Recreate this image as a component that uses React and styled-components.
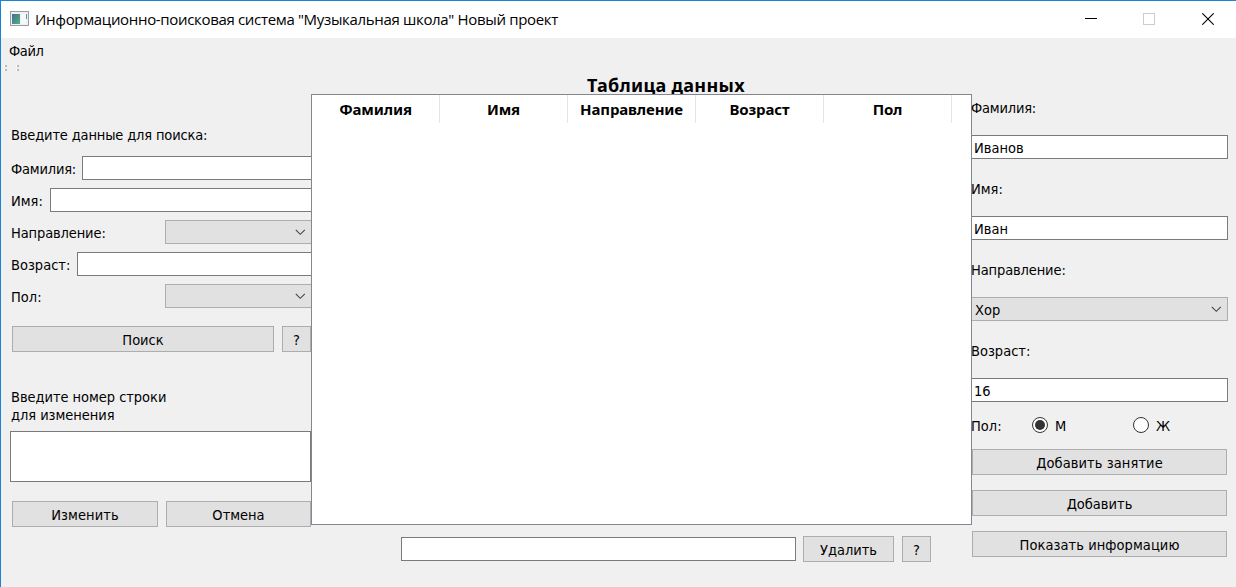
import React, { useState } from "react";
import styled, { createGlobalStyle } from "styled-components";

const GlobalStyle = createGlobalStyle`
  * { box-sizing: border-box; }
  body {
    margin: 0;
    overflow: hidden;
    background: #f0f0f0;
  }
  button, input, textarea { font: inherit; color: inherit; letter-spacing: inherit; }
`;

const Window = styled.div`
  display: flex;
  flex-direction: column;
  width: 1236px;
  height: 587px;
  overflow: hidden;
  border-top: 1px solid #1883d7;
  border-left: 1px solid #1883d7;
  background: #f0f0f0;
  color: #000;
  font: 14.5px/18px "DejaVu Sans Condensed", "DejaVu Sans", sans-serif;
  white-space: nowrap;
`;

const TitleBar = styled.header`
  display: flex;
  align-items: center;
  flex: none;
  height: 37px;
  padding: 0 0 1px 9px;
  background: #fff;
`;

const Title = styled.h1`
  flex: 1;
  margin: 0 0 0 5px;
  font: 400 15px/20px "Open Sans", "Noto Sans", sans-serif;
  letter-spacing: -0.33px;
`;

const WindowControl = styled.button`
  display: grid;
  place-items: center;
  width: 56px;
  height: 36px;
  margin-left: 2px;
  padding: 0;
  border: 0;
  background: none;
  &:last-child { margin-left: 3px; }
`;

const MenuBar = styled.nav`
  display: flex;
  align-items: center;
  flex: none;
  height: 24px;
  padding: 2px 0 0 8px;
`;

const MenuItem = styled.span`
  letter-spacing: -0.4px;
`;

const ToolBar = styled.div`
  display: flex;
  gap: 9px;
  flex: none;
  height: 13px;
  padding: 3px 0 0 3px;
`;

const Content = styled.main`
  display: grid;
  grid-template-columns: 310px 661px 256px;
  flex: 1;
`;

const SearchPanel = styled.section`
  display: flex;
  flex-direction: column;
  padding: 51px 0 0 10px;
`;

const Label = styled.label`
  letter-spacing: ${(p) => p.$tracking ?? 0}px;
`;

const SearchFields = styled.div`
  display: flex;
  flex-direction: column;
  gap: 8px;
  margin-top: 12px;
`;

const FieldRow = styled.div`
  display: grid;
  grid-template-columns: ${(p) => p.$labelWidth}px 1fr;
  align-items: center;
  height: 24px;
  label { padding-top: 2px; }
`;

const LineEdit = styled.input`
  width: 100%;
  min-width: 0;
  height: 24px;
  padding: 1px 2px 0;
  border: 1px solid #7a7a7a;
  border-left-width: ${(p) => (p.$joined === "left" ? 0 : 1)}px;
  border-right-width: ${(p) => (p.$joined === "right" ? 0 : 1)}px;
  border-radius: 0;
  background: #fff;
  outline: 0;
`;

const ComboBox = styled.div`
  display: flex;
  align-items: center;
  justify-content: space-between;
  width: 100%;
  height: 24px;
  padding: 1px 5px 0 3px;
  border: 1px solid #adadad;
  border-left-width: ${(p) => (p.$joined === "left" ? 0 : 1)}px;
  border-right-width: ${(p) => (p.$joined === "right" ? 0 : 1)}px;
  background: #e1e1e1;
`;

const ComboText = styled.span`
  min-height: 18px;
`;

const PushButton = styled.button`
  height: 26px;
  padding: 1px 0 0;
  border: 1px solid #adadad;
  border-radius: 0;
  background: #e1e1e1;
  text-align: center;
  letter-spacing: ${(p) => p.$tracking ?? 0}px;
`;

const ButtonRow = styled.div`
  display: grid;
  grid-template-columns: ${(p) => p.$columns};
  gap: 8px;
  margin: ${(p) => p.$top}px 0 0 1px;
`;

const RowPrompt = styled(Label)`
  margin-top: 36px;
  white-space: pre-line;
`;

const RowNumbers = styled.textarea`
  display: block;
  height: 51px;
  margin: 7px 0 0 -1px;
  padding: 3px;
  border: 1px solid #7a7a7a;
  border-radius: 0;
  background: #fff;
  resize: none;
  outline: 0;
`;

const TablePanel = styled.section`
  display: flex;
  flex-direction: column;
`;

const TableHeading = styled.h2`
  height: 19px;
  margin: 0 0 0 49px;
  font: 700 18px/20px "Noto Sans", "Open Sans", sans-serif;
  letter-spacing: 0.3px;
  text-align: center;
`;

const DataTable = styled.div`
  height: 431px;
  border: 1px solid #828790;
  background: #fff;
`;

const HeaderRow = styled.div`
  display: grid;
  grid-template-columns: repeat(5, 128px);
  height: 28px;
`;

const HeaderCell = styled.div`
  padding-top: 5px;
  border-right: 1px solid #e5e5e5;
  font: 700 15px/18px "Noto Sans", "Open Sans", sans-serif;
  letter-spacing: -0.15px;
  text-align: center;
`;

const DeleteRow = styled.div`
  display: flex;
  align-items: center;
  margin: 11px 0 0 90px;
`;

const DeleteEdit = styled(LineEdit)`
  width: 395px;
  margin-right: 7px;
`;

const DeleteButton = styled(PushButton)`
  width: 91px;
  margin-right: 8px;
`;

const HelpButton = styled(PushButton)`
  width: 29px;
`;

const EntryPanel = styled.section`
  display: flex;
  flex-direction: column;
  padding-top: 24px;
`;

const EntryField = styled.div`
  display: flex;
  flex-direction: column;
  gap: 18px;
  height: 81px;
  label { margin-left: -1px; }
`;

const GenderRow = styled.div`
  display: grid;
  grid-template-columns: 60px 101px 1fr;
  height: 18px;
  margin-top: -7px;
  > label:first-child { margin-left: -1px; padding-top: 1px; }
`;

const RadioLabel = styled.label`
  display: flex;
  align-items: center;
  gap: 7px;
  height: 18px;
`;

const RadioText = styled.span`
  padding-top: 2px;
`;

const Radio = styled.input`
  appearance: none;
  display: grid;
  place-items: center;
  width: 16px;
  height: 16px;
  margin: 0;
  border: 1px solid #333;
  border-radius: 50%;
  background: #fff;
  &:checked::before {
    content: "";
    width: 10px;
    height: 10px;
    border-radius: 50%;
    background: #333;
  }
`;

const EntryActions = styled.div`
  display: flex;
  flex-direction: column;
  gap: 15px;
  margin: 15px 1px 0 0;
`;

function AppIcon() {
  return (
    <svg width="20" height="16" viewBox="0 0 20 16" shapeRendering="crispEdges">
      <defs>
        <linearGradient id="pane" x1="0" y1="0" x2="1" y2="1">
          <stop offset="0" stopColor="#3f6f96" />
          <stop offset="1" stopColor="#55b07c" />
        </linearGradient>
      </defs>
      <rect x="0.5" y="0.5" width="18" height="14" fill="#eef1f2" stroke="#9a9ea1" />
      <rect x="2" y="3" width="8" height="10" fill="url(#pane)" />
      <rect x="11" y="3" width="5" height="10" fill="#f6f7f8" />
      <rect x="16" y="3" width="1" height="5" fill="#4d97a0" />
    </svg>
  );
}

function Grip() {
  return (
    <svg width="3" height="7" viewBox="0 0 3 7" shapeRendering="crispEdges">
      <path d="M0 0h2v2H0zM0 4h2v2H0z" fill="#fff" />
      <path d="M1 0h2v2H1zM1 4h2v2H1z" fill="#b8b8b8" />
    </svg>
  );
}

function Chevron() {
  return (
    <svg width="11" height="7" viewBox="0 0 11 7" fill="none" stroke="#444" strokeWidth="1.1">
      <path d="M0.8 0.8 5.3 5.3 9.8 0.8" />
    </svg>
  );
}

const COLUMNS = ["Фамилия", "Имя", "Направление", "Возраст", "Пол"];

const SEARCH_FIELDS = [
  { label: "Фамилия:", width: 71, tracking: -0.2 },
  { label: "Имя:", width: 39, tracking: 0 },
  { label: "Направление:", width: 154, tracking: -0.12, combo: true },
  { label: "Возраст:", width: 66, tracking: 0 },
  { label: "Пол:", width: 154, tracking: 0, combo: true },
];

const ENTRY_FIELDS = [
  { label: "Фамилия:", value: "Иванов", tracking: -0.2 },
  { label: "Имя:", value: "Иван", tracking: 0 },
  { label: "Направление:", value: "Хор", tracking: -0.12, combo: true },
  { label: "Возраст:", value: "16", tracking: 0 },
];

export default function App() {
  const [gender, setGender] = useState("М");
  return (
    <>
      <GlobalStyle />
      <Window>
        <TitleBar>
          <AppIcon />
          <Title>Информационно-поисковая система "Музыкальная школа" Новый проект</Title>
          <WindowControl>
            <svg width="12" height="12" viewBox="0 0 12 12" shapeRendering="crispEdges">
              <path d="M0 5h12v1H0z" />
            </svg>
          </WindowControl>
          <WindowControl>
            <svg width="12" height="12" viewBox="0 0 12 12" shapeRendering="crispEdges">
              <path d="M.5.5h11v11H.5z" fill="none" stroke="#ccc" />
            </svg>
          </WindowControl>
          <WindowControl>
            <svg width="12" height="12" viewBox="0 0 12 12">
              <path d="m.3.3 11.4 11.4M11.7.3.3 11.7" stroke="#000" strokeWidth="1.1" />
            </svg>
          </WindowControl>
        </TitleBar>
        <MenuBar>
          <MenuItem>Файл</MenuItem>
        </MenuBar>
        <ToolBar>
          <Grip />
          <Grip />
        </ToolBar>
        <Content>
          <SearchPanel>
            <Label $tracking={-0.15}>Введите данные для поиска:</Label>
            <SearchFields>
              {SEARCH_FIELDS.map((f) => (
                <FieldRow key={f.label} $labelWidth={f.width}>
                  <Label $tracking={f.tracking}>{f.label}</Label>
                  {f.combo ? (
                    <ComboBox $joined="right">
                      <ComboText />
                      <Chevron />
                    </ComboBox>
                  ) : (
                    <LineEdit $joined="right" />
                  )}
                </FieldRow>
              ))}
            </SearchFields>
            <ButtonRow $columns="262px 29px" $top={18}>
              <PushButton>Поиск</PushButton>
              <PushButton>?</PushButton>
            </ButtonRow>
            <RowPrompt $tracking={-0.04}>{"Введите номер строки\nдля изменения"}</RowPrompt>
            <RowNumbers />
            <ButtonRow $columns="146px 145px" $top={19}>
              <PushButton $tracking={0.1}>Изменить</PushButton>
              <PushButton>Отмена</PushButton>
            </ButtonRow>
          </SearchPanel>
          <TablePanel>
            <TableHeading>Таблица данных</TableHeading>
            <DataTable>
              <HeaderRow>
                {COLUMNS.map((c) => (
                  <HeaderCell key={c}>{c}</HeaderCell>
                ))}
              </HeaderRow>
            </DataTable>
            <DeleteRow>
              <DeleteEdit />
              <DeleteButton>Удалить</DeleteButton>
              <HelpButton>?</HelpButton>
            </DeleteRow>
          </TablePanel>
          <EntryPanel>
            {ENTRY_FIELDS.map((f) => (
              <EntryField key={f.label}>
                <Label $tracking={f.tracking}>{f.label}</Label>
                {f.combo ? (
                  <ComboBox $joined="left">
                    <ComboText>{f.value}</ComboText>
                    <Chevron />
                  </ComboBox>
                ) : (
                  <LineEdit $joined="left" defaultValue={f.value} />
                )}
              </EntryField>
            ))}
            <GenderRow>
              <Label>Пол:</Label>
              {["М", "Ж"].map((g) => (
                <RadioLabel key={g}>
                  <Radio type="radio" name="gender" checked={gender === g} onChange={() => setGender(g)} />
                  <RadioText>{g}</RadioText>
                </RadioLabel>
              ))}
            </GenderRow>
            <EntryActions>
              <PushButton $tracking={0.08}>Добавить занятие</PushButton>
              <PushButton>Добавить</PushButton>
              <PushButton $tracking={0.07}>Показать информацию</PushButton>
            </EntryActions>
          </EntryPanel>
        </Content>
      </Window>
    </>
  );
}
